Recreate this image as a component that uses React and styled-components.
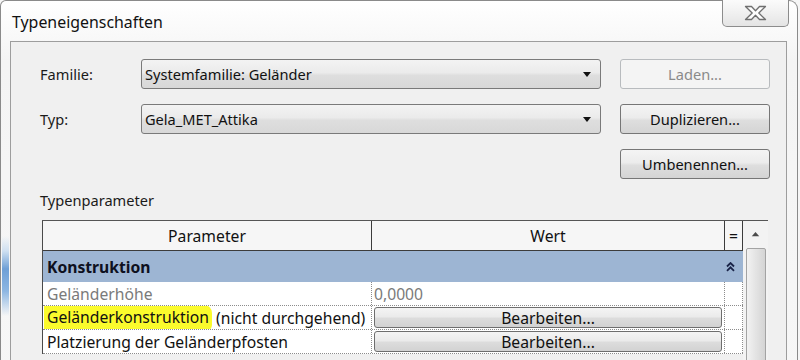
import React from 'react'
import styled, { createGlobalStyle } from 'styled-components'

const GlobalStyle = createGlobalStyle`
  html, body {
    margin: 0;
    padding: 0;
    background: #f6f6f6;
    overflow: hidden;
  }
  body {
    font-family: "Noto Sans", "Open Sans", sans-serif;
    font-size: 14.6px;
    color: #1b1b1b;
  }
`

const rows = [
    { name: 'Geländerhöhe', value: '0,0000', muted: true },
    { name: 'Geländerkonstruktion', extra: ' (nicht durchgehend)', marked: true, button: true },
    { name: 'Platzierung der Geländerpfosten', button: true },
]

const App = () => (
    <>
        <GlobalStyle />
        <Window>
            <TitleBar>
                <Title>Typeneigenschaften</Title>
                <CloseButton>
                    <svg width="23" height="16" viewBox="0 0 23 16">
                        <polygon
                            points="1.5,1.5 7.5,1.5 11.5,5.8 15.5,1.5 21.5,1.5 14.8,8 21.5,14.5 15.5,14.5 11.5,10.2 7.5,14.5 1.5,14.5 8.2,8"
                            fill="#fdfdfd" stroke="#6f6f6f" strokeWidth="1.3" strokeLinejoin="round" />
                    </svg>
                </CloseButton>
            </TitleBar>
            <Client>
                <Form>
                    <Label>Familie:</Label>
                    <Select>
                        Systemfamilie: Geländer
                        <Arrow />
                    </Select>
                    <Button disabled>Laden...</Button>

                    <Label>Typ:</Label>
                    <Select>
                        Gela_MET_Attika
                        <Arrow />
                    </Select>
                    <Button>Duplizieren...</Button>

                    <span />
                    <span />
                    <Button>Umbenennen...</Button>
                </Form>

                <SectionLabel>Typenparameter</SectionLabel>

                <Table>
                    <Grid>
                        <HeadRow>
                            <HeadCell>Parameter</HeadCell>
                            <HeadCell>Wert</HeadCell>
                            <HeadCell>=</HeadCell>
                        </HeadRow>
                        <GroupRow>
                            <span>Konstruktion</span>
                            <svg width="9" height="10" viewBox="0 0 9 10">
                                <path d="M1 4.5 L4.5 1 L8 4.5 M1 8.8 L4.5 5.3 L8 8.8" fill="none" stroke="#1a2448" strokeWidth="1.8" />
                            </svg>
                        </GroupRow>
                        {rows.map((r) => (
                            <Row key={r.name}>
                                <NameCell muted={r.muted}>
                                    {r.marked ? <Marker>{r.name}</Marker> : r.name}
                                    {r.extra}
                                </NameCell>
                                <ValueCell muted={r.muted}>
                                    {r.button ? <EditButton>Bearbeiten...</EditButton> : r.value}
                                </ValueCell>
                                <EmptyCell />
                            </Row>
                        ))}
                    </Grid>
                    <ScrollBar>
                        <svg width="9" height="6" viewBox="0 0 9 6">
                            <polygon points="0.5,5.5 4.5,1 8.5,5.5" fill="#4a4a4a" />
                        </svg>
                        <Thumb />
                    </ScrollBar>
                </Table>
            </Client>
        </Window>
    </>
)

const Arrow = () => (
    <ArrowIcon width="8" height="5" viewBox="0 0 8 5">
        <polygon points="0,0 8,0 4,5" fill="#111" />
    </ArrowIcon>
)

const Window = styled.div`
    width: 798px;
    height: 400px;
    box-sizing: border-box;
    margin: 0;
    border: 1px solid #8a8a8a;
    border-bottom: none;
    border-radius: 6px 9px 0 0;
    padding: 0 8px 0 9px;
    display: flex;
    flex-direction: column;
    background:
        linear-gradient(to bottom, transparent 235px, #cfe0f1 250px, #6e9fd6 268px, #8db6e2 290px, transparent 315px) 1px 0 / 7px 100% no-repeat,
        linear-gradient(to bottom, #ffffff, #f4f4f4 60px, #f7f7f7);
`

const TitleBar = styled.div`
    height: 40px;
    display: flex;
    justify-content: space-between;
    align-items: flex-start;
`

const Title = styled.div`
    margin: 10px 0 0 2px;
    font-size: 15.9px;
    color: #111;
`

const CloseButton = styled.div`
    width: 65px;
    height: 26px;
    margin: -1px 0 0 0;
    border: 1px solid #8c8c8c;
    border-top: none;
    border-radius: 0 0 5px 5px;
    background: linear-gradient(to bottom, #fbfbfb, #efefef 55%, #e4e4e4);
    display: flex;
    align-items: center;
    justify-content: center;
`

const Client = styled.div`
    flex: 1;
    margin-right: 2px;
    border: 1px solid #9d9d9d;
    background: #f0f0f0;
    padding: 17px 0 0 29px;
`

const Form = styled.div`
    display: grid;
    grid-template-columns: 82px 460px 150px;
    grid-auto-rows: 30px;
    column-gap: 19px;
    row-gap: 15px;
    align-items: center;
`

const Label = styled.div`
    color: #1b1b1b;
`

const Select = styled.div`
    height: 30px;
    box-sizing: border-box;
    border: 1px solid #7a7a7a;
    border-radius: 3px;
    background: linear-gradient(to bottom, #f3f3f3, #ebebeb 45%, #dedede 55%, #d8d8d8);
    display: flex;
    align-items: center;
    justify-content: space-between;
    padding: 0 8px 0 3px;
    color: #111;
`

const ArrowIcon = styled.svg`
    margin-right: 1px;
`

const Button = styled.div`
    height: 30px;
    box-sizing: border-box;
    border: 1px solid ${(p) => (p.disabled ? '#b8bbbe' : '#767676')};
    border-radius: 3px;
    background: ${(p) =>
        p.disabled
            ? '#f4f4f4'
            : 'linear-gradient(to bottom, #f4f4f4, #ececec 45%, #dedede 55%, #d4d4d4)'};
    color: ${(p) => (p.disabled ? '#8a8a8a' : '#111')};
    display: flex;
    align-items: center;
    justify-content: center;
`

const SectionLabel = styled.div`
    margin-top: 11px;
    line-height: 20px;
`

const Table = styled.div`
    margin: 10px 0 0 2px;
    width: 726px;
    border-top: 1px solid #555;
    display: flex;
    align-items: flex-start;
    font-size: 15.7px;
`

const Grid = styled.div`
    width: 700px;
    border-left: 1px solid #4a4a4a;
`

const HeadRow = styled.div`
    display: grid;
    grid-template-columns: 329px 353px 18px;
    height: 29px;
    border-bottom: 1px solid #3c3c3c;
    background: #f6f6f6;
`

const HeadCell = styled.div`
    border-right: 1px solid #3c3c3c;
    display: flex;
    align-items: center;
    justify-content: center;
    color: #111;
`

const GroupRow = styled.div`
    height: 31px;
    background: #9db5d3;
    display: flex;
    align-items: center;
    justify-content: space-between;
    padding: 0 8px 0 4px;
    font-weight: bold;
    color: #0e1020;
`

const Row = styled.div`
    display: grid;
    grid-template-columns: 329px 353px 18px;
    height: 24px;
    background: #fff;
    border-bottom: 1px dotted #8c8c8c;
    box-sizing: border-box;
`

const NameCell = styled.div`
    border-right: 1px dotted #8c8c8c;
    padding-left: 4px;
    display: flex;
    align-items: center;
    white-space: pre;
    overflow: hidden;
    color: ${(p) => (p.muted ? '#7a7a7a' : '#111')};
`

const Marker = styled.span`
    background: #fbfb2c;
    margin-left: -3px;
    padding: 1px 3px 3px;
    border-radius: 2px 8px 6px 3px;
`

const ValueCell = styled.div`
    border-right: 1px dotted #8c8c8c;
    padding: 0 2px 0 2px;
    display: flex;
    align-items: center;
    color: ${(p) => (p.muted ? '#7a7a7a' : '#111')};
`

const EmptyCell = styled.div`
    border-right: 1px dotted #8c8c8c;
`

const EditButton = styled.div`
    flex: 1;
    height: 21px;
    box-sizing: border-box;
    border: 1px solid #6e6e6e;
    border-radius: 3px;
    background: linear-gradient(to bottom, #f4f4f4, #ebebeb 45%, #dcdcdc 55%, #d2d2d2);
    display: flex;
    align-items: center;
    justify-content: center;
    color: #111;
`

const ScrollBar = styled.div`
    width: 26px;
    height: 160px;
    background: #f3f3f3;
    display: flex;
    flex-direction: column;
    align-items: center;
    padding-top: 10px;
    box-sizing: border-box;
    gap: 11px;
`

const Thumb = styled.div`
    width: 18px;
    height: 140px;
    border: 1px solid #a3a3a3;
    border-radius: 2px;
    background: linear-gradient(to right, #f2f2f2, #e3e3e3 50%, #d4d4d4);
`

export default App
